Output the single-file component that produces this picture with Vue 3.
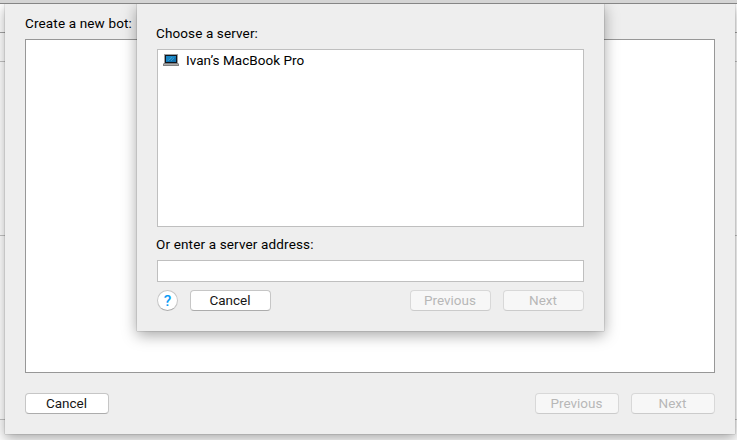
<script setup>
import { ref } from 'vue'

const address = ref('')
const servers = ['Ivan’s MacBook Pro']
</script>

<template>
  <main class="window">
    <div class="titlebar"></div>
    <div class="row toolbar"></div>
    <div class="row header"></div>
    <div class="row upper"></div>
    <div class="row lower"></div>
    <div class="row footer"></div>

    <section class="sheet bot-sheet">
      <h1 class="label bot-label"><span>Create a new bot:</span></h1>
      <div class="bot-content"></div>
      <div class="actions">
        <button class="btn wide cancel">Cancel</button>
        <span class="spacer"></span>
        <button class="btn wide prev" disabled>Previous</button>
        <button class="btn wide next" disabled>Next</button>
      </div>
    </section>

    <section class="sheet server-sheet">
      <h2 class="label choose-label">Choose a server:</h2>
      <ul class="servers">
        <li v-for="server in servers" :key="server">
          <svg class="laptop" width="16" height="12" viewBox="0 0 16 12">
            <rect x="1" y="0" width="14" height="9" fill="#a0a0a0" />
            <rect x="2" y="1" width="12" height="8" fill="#10141c" />
            <rect x="3" y="2" width="10" height="6" fill="#1272ae" />
            <path d="M3 2h10v1L3 8z" fill="#1a86c4" />
            <path d="M5 7l4-4M8 7l3-3" stroke="#45a8d8" stroke-width=".7" />
            <path d="M1 9h14l1 1v2H0v-2z" fill="#808080" />
            <rect x="1" y="10" width="14" height="1" fill="#aaa" />
          </svg>
          <span>{{ server }}</span>
        </li>
      </ul>
      <label class="label address-label" for="address">Or enter a server address:</label>
      <input id="address" v-model="address" class="address" type="text" />
      <div class="actions">
        <button class="help" aria-label="Help">?</button>
        <button class="btn cancel">Cancel</button>
        <span class="spacer"></span>
        <button class="btn prev" disabled>Previous</button>
        <button class="btn next" disabled>Next</button>
      </div>
    </section>
  </main>
</template>

<style>
body {
  margin: 0;
}
</style>

<style scoped>
* {
  box-sizing: border-box;
}
.window {
  position: relative;
  width: 737px;
  height: 440px;
  overflow: hidden;
  display: flex;
  flex-direction: column;
  background: #fff;
  color: #000;
  font-family: Roboto, "Liberation Sans", sans-serif;
  font-size: 13.5px;
  line-height: 16px;
}
.titlebar {
  height: 4px;
  flex: none;
  background: #d4d4d4;
  border-bottom: 1px solid #858585;
}
.row {
  flex: none;
  border-bottom: 1px solid #c4c4c4;
}
.toolbar {
  height: 29px;
  border-color: #a5a5a5;
}
.header {
  height: 29px;
}
.upper {
  height: 174px;
}
.lower {
  height: 184px;
}
.footer {
  height: 20px;
  background: #fcfcfc;
  border: 0;
}
.sheet {
  position: absolute;
  top: 4px;
  display: flex;
  flex-direction: column;
  background: #eee;
  clip-path: inset(0 -30px -30px -30px);
}
.bot-sheet {
  left: 5px;
  width: 730px;
  height: 430px;
  padding: 11px 20px 20px;
  box-shadow: 0 0 1px rgba(0, 0, 0, .45), 0 4px 12px rgba(0, 0, 0, .34);
}
.server-sheet {
  left: 137px;
  width: 467px;
  height: 327px;
  padding: 21px 20px 20px;
  box-shadow: 0 0 1px rgba(0, 0, 0, .5), 0 4px 14px rgba(0, 0, 0, .36);
}
.label {
  display: block;
  margin: 0 0 0 -1px;
  font-size: 13.5px;
  font-weight: 400;
  line-height: 16px;
  white-space: nowrap;
}
.bot-label {
  margin-left: 0;
  letter-spacing: .15px;
}
.choose-label {
  letter-spacing: .12px;
}
.address-label {
  margin-top: 9px;
  letter-spacing: .15px;
}
.bot-content {
  height: 334px;
  margin-top: 8px;
  border: 1px solid #979797;
  background: #fff;
}
.servers {
  height: 178px;
  margin: 8px 0 0;
  padding: 2px 5px;
  list-style: none;
  border: 1px solid #bfbfbf;
  background: #fff;
}
.servers li {
  display: flex;
  align-items: center;
  gap: 7px;
  height: 16px;
  letter-spacing: .04px;
}
.address {
  display: block;
  height: 22px;
  margin: 8px 0 0;
  padding: 2px 4px;
  border: 1px solid #bfbfbf;
  border-radius: 0;
  outline: 0;
  background: #fff;
  font: inherit;
}
.actions {
  display: flex;
  gap: 12px;
  margin-top: 20px;
}
.server-sheet .actions {
  margin-top: 8px;
}
.spacer {
  flex: 1;
}
.btn {
  width: 81px;
  height: 21px;
  padding: 0 1px 0 0;
  border: 1px solid #c6c6c6;
  border-bottom-color: #acacac;
  border-radius: 4px;
  background: #fff;
  color: #161616;
  font-family: inherit;
  font-size: 13.5px;
  line-height: 19px;
}
.wide {
  width: 84px;
}
.btn:disabled {
  border-color: #d8d8d8;
  border-bottom-color: #cbcbcb;
  background: #f7f7f7;
  color: #b7b7b7;
}
.help {
  width: 21px;
  height: 21px;
  padding: 0;
  border: 1px solid #c6c6c6;
  border-bottom-color: #acacac;
  border-radius: 50%;
  background: #fff;
  color: #0a9bf5;
  font-family: inherit;
  font-size: 15.5px;
  font-weight: 500;
  line-height: 20px;
}
</style>
